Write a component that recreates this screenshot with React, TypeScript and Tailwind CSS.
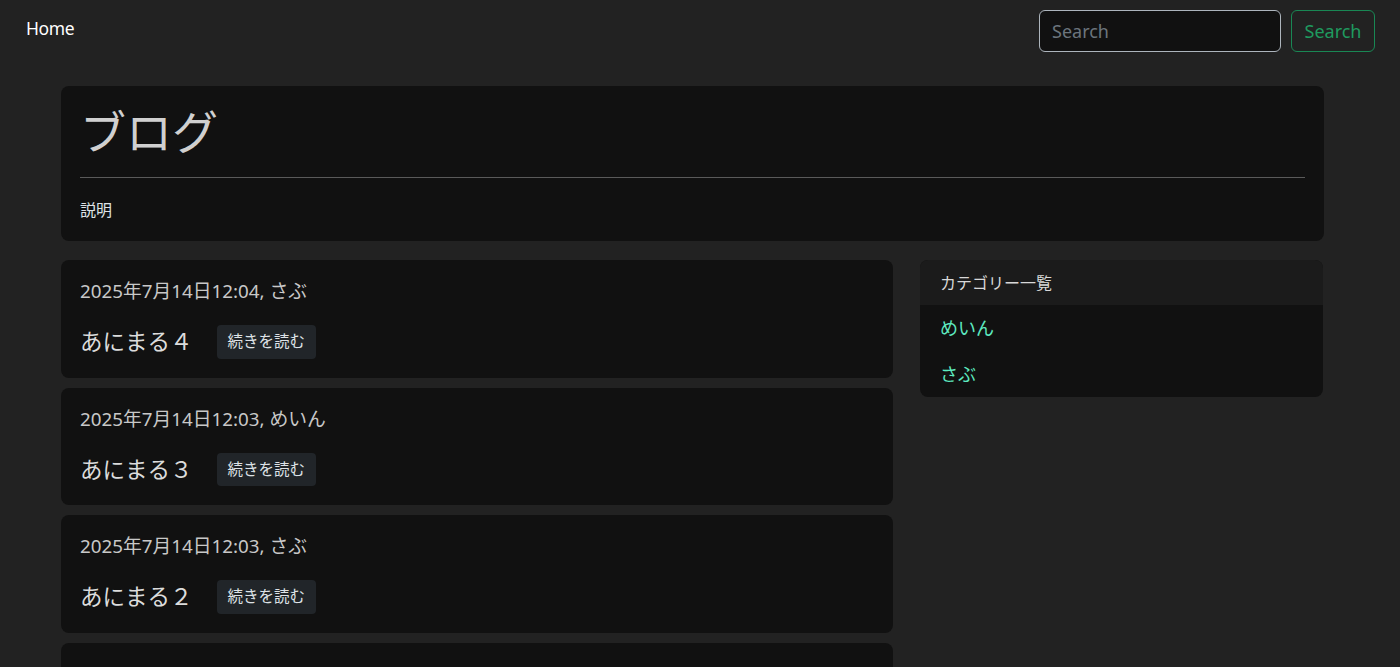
import React from "react";

const font = { fontFamily: '"Noto Sans", "Noto Sans CJK JP", sans-serif' };

const posts = [
  { date: "2025年7月14日12:04, さぶ", title: "あにまる４" },
  { date: "2025年7月14日12:03, めいん", title: "あにまる３" },
  { date: "2025年7月14日12:03, さぶ", title: "あにまる２" },
];

export default function App() {
  return (
    <div className="h-[667px] bg-[#222222] text-[#dee2e6] overflow-hidden" style={font}>
      <nav className="flex items-start justify-between pl-[26px] pr-[25px] py-[10px] h-[62px]">
        <a className="mt-[4px] text-[17.5px] leading-[28px] text-white tracking-[-0.4px]">Home</a>
        <div className="flex items-center gap-[10px]">
          <input
            placeholder="Search"
            className="w-[242px] h-[42px] rounded-[6px] border border-[#adb5bd] bg-[#111111] px-[12px] text-[18px] text-[#dee2e6] placeholder-[#6c757d] outline-none"
          />
          <button className="h-[42px] w-[84px] rounded-[6px] border border-[#198754] text-[18px] text-[#1f9a5f]">
            Search
          </button>
        </div>
      </nav>

      <main className="ml-[61px] mr-[76px] mt-[24px]">
        <section className="rounded-[8px] bg-[#111111] px-[19px] pt-[16px] pb-[19px]">
          <h1 className="text-[46px] leading-[58px] text-[#d0d0d0] font-normal">ブログ</h1>
          <hr className="mt-[17px] mb-[20px] border-0 border-t border-[#5a5a5a]" />
          <p className="text-[16px] leading-[24px]">説明</p>
        </section>

        <div className="mt-[19px] flex gap-[27px] items-start">
          <div className="w-[832px] flex flex-col gap-[10px]">
            {posts.map((p) => (
              <article key={p.date} className="rounded-[8px] bg-[#111111] px-[19px] pt-[18px] pb-[19px]">
                <div className="text-[18.8px] leading-[27px] text-[#c8c8c8]">{p.date}</div>
                <div className="mt-[20px] flex items-center">
                  <h2 className="text-[22.5px] leading-[33px] font-normal text-[#dcdcdc]">{p.title}</h2>
                  <button className="ml-[24px] h-[33.6px] rounded-[4px] bg-[#212529] px-[11px] text-[15.5px] text-[#dee2e6]">
                    続きを読む
                  </button>
                </div>
              </article>
            ))}
            <article className="h-[118px] rounded-[8px] bg-[#111111]" />
          </div>

          <aside className="w-[403px] rounded-[8px] overflow-hidden bg-[#111111]">
            <div className="h-[45px] bg-[#1b1b1b] px-[20px] flex items-center text-[16px] text-[#d8d8d8]">
              カテゴリー一覧
            </div>
            <div className="h-[46px] px-[20px] flex items-center text-[18px] text-[#5eeac0]">
              めいん
            </div>
            <div className="h-[46px] px-[20px] flex items-center text-[18px] text-[#5eeac0]">
              さぶ
            </div>
          </aside>
        </div>
      </main>
    </div>
  );
}
